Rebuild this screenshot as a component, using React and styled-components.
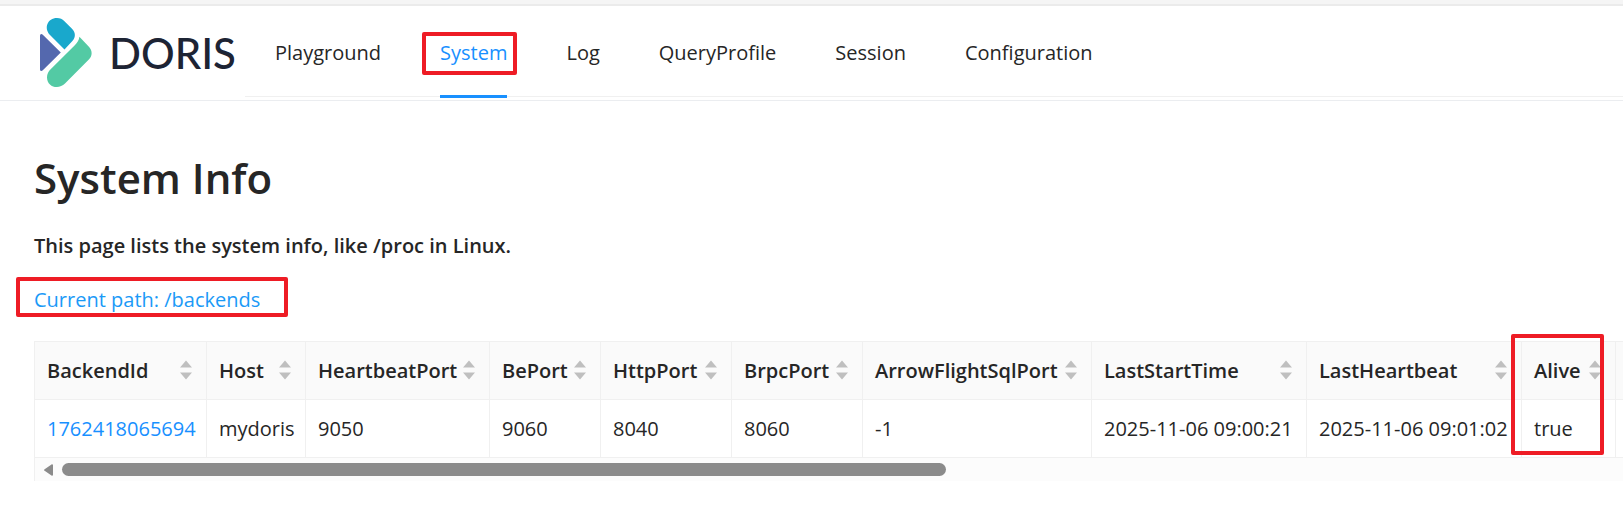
import React from "react";
import styled, { createGlobalStyle } from "styled-components";

const GlobalStyle = createGlobalStyle`
  * {
    box-sizing: border-box;
  }
  body {
    margin: 0;
    background: #fff;
    color: #262626;
    font-family: "Open Sans", "Noto Sans", sans-serif;
    font-size: 20px;
    line-height: 32px;
  }
`;

const Page = styled.div`
  border-top: 4px solid #f5f5f5;
  overflow-x: clip;
`;

const Header = styled.header`
  display: flex;
  align-items: flex-end;
  height: 97px;
  padding-left: 40px;
  border-top: 2px solid #ebebeb;
  border-bottom: 1px solid #ebedf0;
`;

const Logo = styled.a`
  display: flex;
  align-items: center;
  gap: 17px;
  width: 205px;
  height: 94px;
  color: #1d2434;
  font-family: Lato, sans-serif;
  font-size: 42px;
  font-weight: 500;
  text-decoration: none;
`;

const Menu = styled.nav`
  display: flex;
  flex: 1;
  height: 92px;
  margin-bottom: 3px;
  padding-left: 30px;
  gap: 59px;
  border-bottom: 1px solid #f0f0f0;
`;

const MenuLink = styled.a`
  position: relative;
  height: 93px;
  line-height: 96px;
  color: ${(props) => (props.$active ? "#1890ff" : "#262626")};
  border-bottom: 3px solid
    ${(props) => (props.$active ? "#1890ff" : "transparent")};
  text-decoration: none;
`;

const Mark = styled.span`
  position: absolute;
  border: 4px solid #ee1c25;
  border-radius: 2px;
  pointer-events: none;
`;

const MenuMark = styled(Mark)`
  top: 27px;
  left: -18px;
  right: -10px;
  height: 43px;
`;

const PathMark = styled(Mark)`
  top: -7px;
  left: -18px;
  right: -28px;
  height: 40px;
`;

const CellMark = styled(Mark)`
  top: -8px;
  left: -11px;
  right: 11px;
  height: 121px;
`;

const Content = styled.main`
  padding: 47px 0 0 34px;
`;

const Title = styled.h1`
  margin: 0;
  font-size: 42px;
  line-height: 60px;
  font-weight: 600;
`;

const Description = styled.p`
  margin: 22px 0;
  font-weight: 600;
`;

const PathLink = styled.a`
  position: relative;
  display: inline-block;
  color: #1b9af7;
  text-decoration: none;
`;

const TableWrapper = styled.div`
  margin-top: 25px;
  border-left: 1px solid #f0f0f0;
`;

const Table = styled.table`
  width: 100%;
  table-layout: fixed;
  border-collapse: separate;
  border-spacing: 0;
  border-top: 1px solid #f0f0f0;
`;

const Col = styled.col`
  width: ${(props) => (props.$width ? `${props.$width}px` : "auto")};
`;

const HeadCell = styled.th`
  position: relative;
  height: 58px;
  padding: 0 ${(props) => (props.$empty ? 0 : 12)}px;
  background: #fafafa;
  border-right: ${(props) => (props.$empty ? 0 : 1)}px solid #f0f0f0;
  border-bottom: 1px solid #f0f0f0;
  font-weight: 600;
  text-align: left;
`;

const SortButton = styled.button`
  display: flex;
  align-items: center;
  justify-content: space-between;
  width: 100%;
  padding: 0;
  border: 0;
  background: none;
  color: inherit;
  font: inherit;
`;

const SortIcon = styled.svg`
  flex: none;
  width: 12px;
  height: 20px;
  margin: 0 2px 2px 0;
  fill: #bfbfbf;
`;

const Cell = styled.td`
  height: 58px;
  padding: 0 ${(props) => (props.$empty ? 0 : 12)}px;
  border-right: ${(props) => (props.$empty ? 0 : 1)}px solid #f0f0f0;
  border-bottom: 1px solid #f0f0f0;
  white-space: nowrap;
`;

const CellLink = styled.a`
  color: #1890ff;
  text-decoration: none;
`;

const ScrollTrack = styled.div`
  display: flex;
  align-items: center;
  gap: 9px;
  height: 23px;
  padding-left: 9px;
  background: #fcfcfc;
`;

const ScrollArrow = styled.svg`
  width: 9px;
  height: 12px;
  fill: #8b8b8b;
`;

const ScrollThumb = styled.div`
  width: 56%;
  height: 13px;
  border-radius: 7px;
  background: #8b8b8b;
`;

const menu = [
  "Playground",
  "System",
  "Log",
  "QueryProfile",
  "Session",
  "Configuration",
];

const columns = [
  { name: "BackendId", width: 172, value: "1762418065694", link: true },
  { name: "Host", width: 99, value: "mydoris" },
  { name: "HeartbeatPort", width: 184, value: "9050" },
  { name: "BePort", width: 111, value: "9060" },
  { name: "HttpPort", width: 131, value: "8040" },
  { name: "BrpcPort", width: 131, value: "8060" },
  { name: "ArrowFlightSqlPort", width: 229, value: "-1" },
  { name: "LastStartTime", width: 215, value: "2025-11-06 09:00:21" },
  { name: "LastHeartbeat", width: 215, value: "2025-11-06 09:01:02" },
  { name: "Alive", width: 94, value: "true", marked: true },
];

const DorisIcon = () => (
  <svg width="52" height="70" viewBox="40 18 52 70" aria-hidden="true">
    <path
      fill="#19a8cc"
      d="M64.5 49.5 50 35C43.5 28 47.5 18 57 18c3 0 5.5 1.2 7.200 2.900L72 28.800c3.800 3.800 3.700 8.700.600 12z"
    />
    <path
      fill="#5468ae"
      d="M40 36c0-2 1.400-2.600 2.800-1.200L60.800 52.600 42.800 70.300C41.400 71.600 40 71 40 69.200z"
    />
    <path
      fill="#53caa4"
      d="M79.400 36.800 88.200 46c4.600 4.600 4.400 9.700.400 13.800L65 83.600C58.500 90.200 47 87 47 77.200c0-3.200 1.400-5.700 3.400-7.700L74.800 45.300c2.600-2.600 4.200-5 4.600-8.500z"
    />
  </svg>
);

const App = () => {
  return (
    <Page>
      <GlobalStyle />
      <Header>
        <Logo href="#home">
          <DorisIcon />
          DORIS
        </Logo>
        <Menu>
          {menu.map((item) => (
            <MenuLink key={item} href={`#${item}`} $active={item === "System"}>
              {item}
              {item === "System" && <MenuMark />}
            </MenuLink>
          ))}
        </Menu>
      </Header>
      <Content>
        <Title>System Info</Title>
        <Description>
          This page lists the system info, like /proc in Linux.
        </Description>
        <PathLink href="#backends">
          Current path: /backends
          <PathMark />
        </PathLink>
        <TableWrapper>
          <Table>
            <colgroup>
              {columns.map((col) => (
                <Col key={col.name} $width={col.width} />
              ))}
              <Col />
            </colgroup>
            <thead>
              <tr>
                {columns.map((col) => (
                  <HeadCell key={col.name} scope="col">
                    <SortButton type="button">
                      {col.name}
                      <SortIcon viewBox="0 0 12 20" aria-hidden="true">
                        <path d="M0 7.500 6 .5l6 7zM0 12.500h12l-6 7z" />
                      </SortIcon>
                    </SortButton>
                    {col.marked && <CellMark />}
                  </HeadCell>
                ))}
                <HeadCell as="td" $empty />
              </tr>
            </thead>
            <tbody>
              <tr>
                {columns.map((col) => (
                  <Cell key={col.name}>
                    {col.link ? (
                      <CellLink href={`#${col.value}`}>{col.value}</CellLink>
                    ) : (
                      col.value
                    )}
                  </Cell>
                ))}
                <Cell $empty />
              </tr>
            </tbody>
          </Table>
          <ScrollTrack>
            <ScrollArrow viewBox="0 0 9 12" aria-hidden="true">
              <path d="M7.500.4C8.300 0 9 .3 9 1.200v9.600c0 .9-.7 1.200-1.500.8L.6 6.800c-.8-.5-.8-1.100 0-1.600z" />
            </ScrollArrow>
            <ScrollThumb />
          </ScrollTrack>
        </TableWrapper>
      </Content>
    </Page>
  );
};

export default App;
